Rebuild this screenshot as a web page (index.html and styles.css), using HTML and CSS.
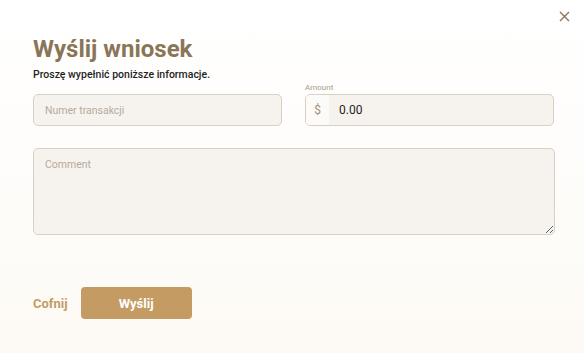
FILE: index.html
```html
<!DOCTYPE html>
<html lang="pl">
<head>
    <meta charset="UTF-8">
    <meta name="viewport" content="width=device-width, initial-scale=1.0">
    <title>Wyślij wniosek</title>
    <link rel="stylesheet" href="styles.css">
</head>
<body>
    <!-- okno dialogowe -->
    <div class="dialog">
        <button class="close-btn" aria-label="Zamknij">
            <svg width="11" height="11" viewBox="0 0 11 11">
                <path d="M1 1 L10 10 M10 1 L1 10" stroke="#8b7558" stroke-width="1.4" fill="none"/>
            </svg>
        </button>

        <h1 class="title">Wyślij wniosek</h1>
        <p class="subtitle">Proszę wypełnić poniższe informacje.</p>

        <div class="row">
            <div class="field">
                <input class="input" type="text" placeholder="Numer transakcji">
            </div>
            <div class="field">
                <label class="field-label">Amount</label>
                <div class="amount">
                    <span class="currency">$</span>
                    <input class="amount-input" type="text" value="0.00">
                </div>
            </div>
        </div>

        <textarea class="comment" placeholder="Comment"></textarea>

        <div class="actions">
            <button class="back-btn">Cofnij</button>
            <button class="submit-btn">Wyślij</button>
        </div>
    </div>
</body>
</html>
```

FILE: styles.css
```css
* {
    margin: 0;
    padding: 0;
    box-sizing: border-box;
}

body {
    width: 584px;
    height: 353px;
    font-family: Roboto, 'Noto Sans', sans-serif;
    background: linear-gradient(180deg, #ffffff 0%, #fdfaf5 100%);
    overflow: hidden;
}

/* okno */
.dialog {
    position: relative;
    height: 100%;
    padding: 33px 29px 0 33px;
}

.close-btn {
    position: absolute;
    top: 11px;
    right: 14px;
    background: none;
    border: none;
    width: 11px;
    height: 11px;
    display: flex;
}

/* nagłówek */
.title {
    font-size: 24px;
    line-height: 32px;
    font-weight: 700;
    color: #8b7558;
}

.subtitle {
    margin-top: 3px;
    font-size: 10.5px;
    line-height: 14px;
    font-weight: 500;
    color: #1e1e1e;
}

/* pola */
.row {
    display: grid;
    grid-template-columns: 249px 249px;
    gap: 23px;
    align-items: end;
    margin-top: 1px;
}

.field {
    display: flex;
    flex-direction: column;
}

.field-label {
    font-size: 8px;
    line-height: 10px;
    color: #a89a88;
    margin-bottom: 1px;
}

.input,
.amount,
.comment {
    height: 32px;
    border: 1px solid #d9d0c4;
    border-radius: 5px;
    background: #f6f3ee;
    font-family: inherit;
    outline: none;
}

.input {
    padding: 0 11px;
    font-size: 10.5px;
    color: #222;
}

.input::placeholder,
.comment::placeholder {
    color: #b7aa9a;
}

.amount {
    display: flex;
    align-items: center;
    overflow: hidden;
}

.currency {
    width: 23px;
    height: 100%;
    display: flex;
    align-items: center;
    justify-content: center;
    background: #fdfbf8;
    color: #9f907c;
    font-size: 12px;
}

.amount-input {
    flex: 1;
    height: 100%;
    border: none;
    background: transparent;
    padding: 0 10px;
    font-family: inherit;
    font-size: 12px;
    color: #1e1e1e;
    outline: none;
}

.comment {
    display: block;
    width: 522px;
    height: 87px;
    margin-top: 22px;
    padding: 9px 11px;
    font-size: 10.5px;
    resize: vertical;
}

/* przyciski */
.actions {
    display: flex;
    align-items: center;
    gap: 13px;
    margin-top: 52px;
}

.back-btn {
    background: none;
    border: none;
    font-family: inherit;
    font-size: 13px;
    font-weight: 700;
    color: #c49c63;
    cursor: pointer;
}

.submit-btn {
    width: 111px;
    height: 32px;
    border: none;
    border-radius: 4px;
    background: #c49c63;
    color: #fff;
    font-family: inherit;
    font-size: 13px;
    font-weight: 700;
    cursor: pointer;
}
```
